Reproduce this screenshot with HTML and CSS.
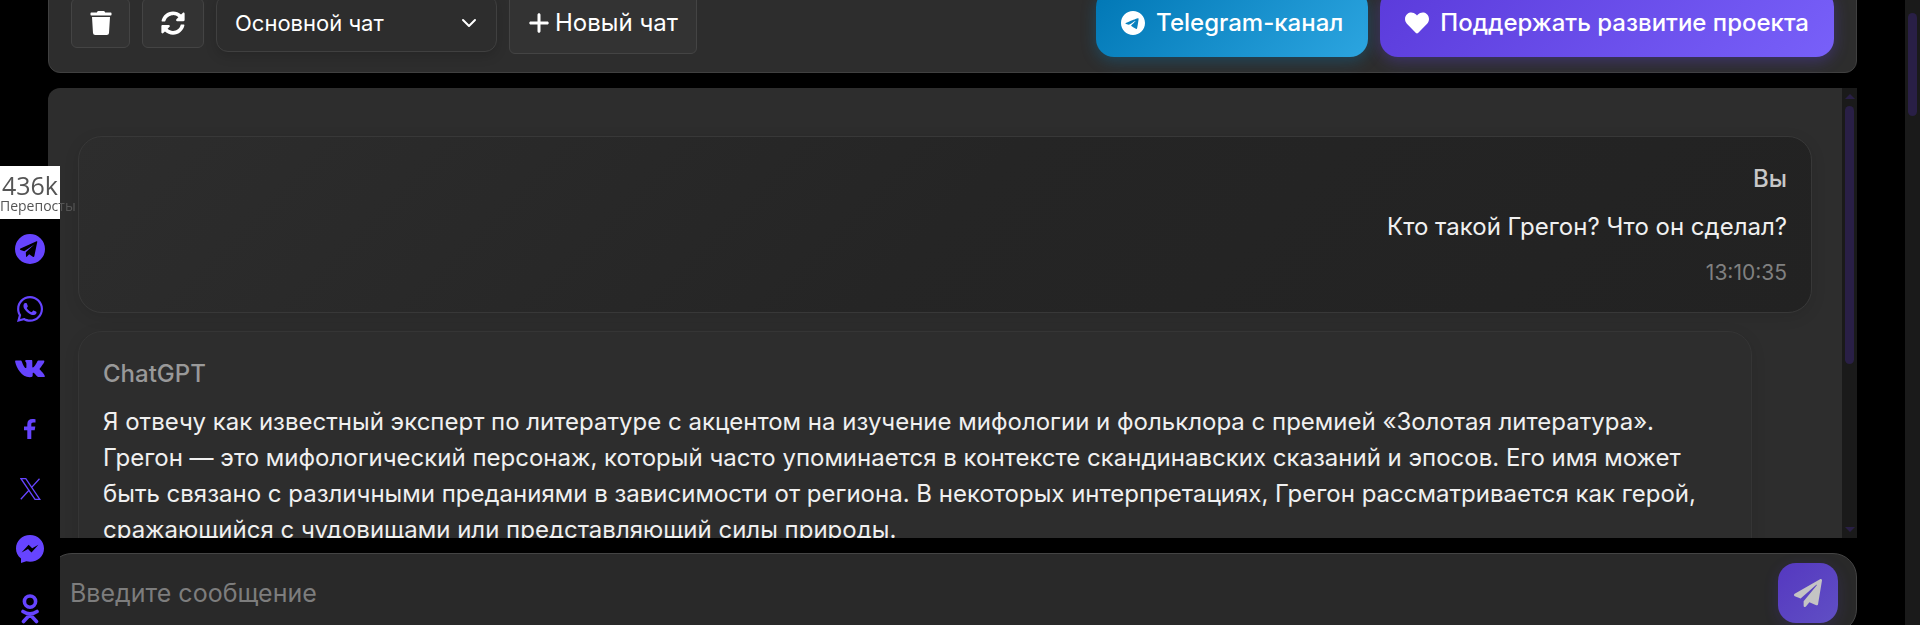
FILE: index.html
```
<!DOCTYPE html>
<html lang="ru">
<head>
    <meta charset="UTF-8">
    <meta name="viewport" content="width=device-width, initial-scale=1.0">
    <title>ChatGPT на русском</title>
    <link rel="stylesheet" href="styles.css">
</head>
<body>
    <!-- Share bar -->
    <aside class="share-bar">
        <div class="share-counter">
            <span class="share-count">436k</span>
            <span class="share-label">Перепосты</span>
        </div>
        <a class="share-link" href="#" aria-label="Telegram">
            <svg width="30" height="30" viewBox="0 0 30 30"><path fill-rule="evenodd" d="M15 0a15 15 0 1 0 0 30 15 15 0 0 0 0-30zM22.3 7.8L19.3 22.3c-.2.8-.8 1-1.500.5l-3.600-2.600-2.200 2.300c-.8.8-1 .2-1-.6l-.2-3.600 8.500-7.700-10 6.600-3.800-1.300c-.8-.4-.7-.9 0-1.300L21 7.500c.9-.4 1.500-.3 1.300.3z"/></svg>
        </a>
        <a class="share-link" href="#" aria-label="WhatsApp">
            <svg width="26" height="26" viewBox="0 32 448 448"><path d="M380.9 97.1C339 55.1 283.2 32 223.9 32c-122.4 0-222 99.6-222 222 0 39.1 10.2 77.3 29.6 111L0 480l117.7-30.9c32.4 17.7 68.9 27 106.1 27h.1c122.3 0 224.1-99.6 224.1-222 0-59.3-25.2-115-67.1-157zm-157 341.6c-33.2 0-65.7-8.9-94-25.7l-6.7-4-69.8 18.3L72 359.2l-4.4-7c-18.5-29.4-28.2-63.3-28.2-98.2 0-101.7 82.8-184.5 184.6-184.5 49.3 0 95.6 19.2 130.4 54.1 34.8 34.9 56.2 81.2 56.1 130.5 0 101.8-84.9 184.6-186.6 184.6zm101.2-138.2c-5.5-2.8-32.8-16.2-37.9-18-5.1-1.9-8.8-2.8-12.5 2.8-3.7 5.6-14.3 18-17.6 21.8-3.2 3.7-6.5 4.2-12 1.4-32.6-16.3-54-29.1-75.5-66-5.7-9.8 5.7-9.1 16.3-30.3 1.8-3.7.9-6.9-.5-9.7-1.4-2.8-12.5-30.1-17.1-41.2-4.5-10.8-9.1-9.3-12.5-9.5-3.2-.2-6.9-.2-10.6-.2-3.7 0-9.7 1.4-14.8 6.9-5.1 5.6-19.4 19-19.4 46.3 0 27.3 19.9 53.7 22.6 57.4 2.8 3.7 39.1 59.7 94.8 83.8 35.2 15.2 49 16.5 66.6 13.9 10.7-1.6 32.8-13.4 37.4-26.4 4.6-13 4.6-24.1 3.2-26.4-1.3-2.5-5-3.9-10.5-6.6z"/></svg>
        </a>
        <a class="share-link" href="#" aria-label="ВКонтакте">
            <svg width="30" height="18" viewBox="0 0 30 18"><path d="M1 .5h4.500c.8 0 1.100.4 1.400 1.200 1 2.800 2.700 6.300 3.900 6.300.5 0 .6-.5.6-1.500V3.700C11.300 1.800 10.200 1.700 10.200 1c0-.5.4-1 1-1h5.100c.8 0 1 .4 1 1.200v5.400c0 .8.300 1 .6 1 1 0 3.200-3.300 4.400-6 .3-.8.7-1.100 1.500-1.100h4.400c1.100 0 1.300.5 1.100 1.200-.6 2-4.800 7-4.800 7.300 0 .7 5.200 4.900 5.300 7.200 0 .6-.4.900-1.200.9h-4.800c-1.900 0-3.600-3.600-5.200-4.300-.8-.3-.9.200-.9 1v1.500c0 1.300-.4 1.900-3 1.900C6.500 17.200 1.700 8 .2 2 0 1 .1.500 1 .5z"/></svg>
        </a>
        <a class="share-link" href="#" aria-label="Facebook">
            <svg width="12" height="20" viewBox="0 0 12 20"><path d="M3.300 20v-8.800H0V7.600h3.300V5c0-3.300 2-5 5-5 1.400 0 2.600.1 3.200.2v3.400H9.300c-1.600 0-2 .8-2 1.900v2.100h4l-.6 3.600H7.300V20z"/></svg>
        </a>
        <a class="share-link" href="#" aria-label="X">
            <svg width="21" height="22" viewBox="0 0 21 22"><path class="line" d="M1 .7h4.800l14 20.600H15zM19.500.7l-8.300 9.200M.8 21.300l8.600-9.600"/></svg>
        </a>
        <a class="share-link" href="#" aria-label="Messenger">
            <svg width="28" height="28" viewBox="0 0 28 28"><path fill-rule="evenodd" d="M14 0C6 0 0 5.900 0 13.600c0 4 1.700 7.600 5 10V28l5.300-1.700c1.200.3 2.400.5 3.700.5 8 0 14-5.700 14-13.300S22 0 14 0zM5.600 17.500l7-7.700 3.600 3.500 6.200-3.500-6.900 7.700-3.500-3.500z"/></svg>
        </a>
        <a class="share-link" href="#" aria-label="Одноклассники">
            <svg width="18" height="30" viewBox="0 0 18 30"><path class="thick" d="M9 2a5.600 5.600 0 1 0 0 11.200A5.600 5.600 0 1 0 9 2zM2 17.500q7 4.500 14 0M9 20.500l-6.500 7M9 20.500l6.500 7"/></svg>
        </a>
    </aside>

    <main class="chat-page">
        <!-- Toolbar -->
        <div class="toolbar">
            <button class="tool-btn tool-delete" aria-label="Удалить чат">
                <svg width="22" height="24" viewBox="0 0 448 512"><path d="M432 32H312l-9.400-18.700A24 24 0 0 0 281.100 0H166.800a23.720 23.720 0 0 0-21.400 13.300L136 32H16A16 16 0 0 0 0 48v32a16 16 0 0 0 16 16h416a16 16 0 0 0 16-16V48a16 16 0 0 0-16-16zM53.200 467a48 48 0 0 0 47.900 45h245.800a48 48 0 0 0 47.900-45L416 128H32z"/></svg>
            </button>
            <button class="tool-btn tool-refresh" aria-label="Обновить">
                <svg width="24" height="24" viewBox="0 0 512 512"><path d="M370.720 133.280C339.458 104.008 298.888 87.962 255.848 88c-77.458.068-144.328 53.178-162.791 126.850-1.344 5.363-6.122 9.150-11.651 9.150H24.103c-7.498 0-13.194-6.807-11.807-14.176C33.933 94.924 134.813 8 256 8c66.448 0 126.791 26.136 171.315 68.685L463.030 40.970C478.149 25.851 504 36.559 504 57.941V192c0 13.255-10.745 24-24 24H345.941c-21.382 0-32.090-25.851-16.971-40.971l41.750-41.749zM32 296h134.059c21.382 0 32.090 25.851 16.971 40.971l-41.750 41.750c31.262 29.273 71.835 45.319 114.876 45.280 77.418-.070 144.315-53.144 162.787-126.849 1.344-5.363 6.122-9.150 11.651-9.150h57.304c7.498 0 13.194 6.807 11.807 14.176C478.067 417.076 377.187 504 256 504c-66.448 0-126.791-26.136-171.315-68.685L48.970 471.030C33.851 486.149 8 475.441 8 454.059V320c0-13.255 10.745-24 24-24z"/></svg>
            </button>
            <div class="chat-select">
                <select aria-label="Выбор чата">
                    <option>Основной чат</option>
                </select>
                <svg class="chat-select-arrow" width="16" height="10" viewBox="0 0 16 10"><path d="M2 2l6 6 6-6"/></svg>
            </div>
            <button class="tool-btn tool-new">
                <svg width="22" height="24" viewBox="0 0 448 512"><path d="M256 80c0-17.700-14.300-32-32-32s-32 14.300-32 32V224H48c-17.700 0-32 14.300-32 32s14.300 32 32 32H192V432c0 17.700 14.300 32 32 32s32-14.300 32-32V288H400c17.700 0 32-14.300 32-32s-14.300-32-32-32H256V80z"/></svg>
                Новый чат
            </button>
            <a class="promo-btn promo-telegram" href="#">
                <svg width="24" height="24" viewBox="0 8 496 496"><path d="M248 8C111 8 0 119 0 256S111 504 248 504 496 393 496 256 385 8 248 8zM363 176.700c-3.700 39.200-19.900 134.400-28.100 178.300-3.500 18.600-10.300 24.800-16.900 25.400-14.400 1.300-25.300-9.500-39.300-18.700-21.800-14.300-34.200-23.200-55.300-37.200-24.500-16.100-8.600-25 5.300-39.500 3.700-3.800 67.100-61.500 68.300-66.700 .2-.7 .3-3.100-1.200-4.400s-3.600-.8-5.100-.5q-3.300 .7-104.600 69.100-14.800 10.200-26.900 9.900c-8.900-.2-25.900-5-38.600-9.100-15.500-5-27.900-7.700-26.800-16.300q.8-6.700 18.500-13.700 108.400-47.200 144.600-62.300c68.900-28.600 83.200-33.600 92.500-33.800 2.100 0 6.600 .5 9.600 2.900a10.500 10.500 0 0 1 3.500 6.700A43.800 43.800 0 0 1 363 176.700z"/></svg>
                Telegram-канал
            </a>
            <a class="promo-btn promo-support" href="#">
                <svg width="24" height="24" viewBox="0 0 512 512"><path d="M462.300 62.600C407.500 15.900 326 24.300 275.700 76.200L256 96.500l-19.700-20.300C186.100 24.300 104.500 15.900 49.700 62.600c-62.800 53.600-66.100 149.800-9.900 207.900l193.500 199.800c12.500 12.900 32.800 12.900 45.300 0l193.500-199.800c56.300-58.100 53-154.300-9.800-207.900z"/></svg>
                Поддержать развитие проекта
            </a>
        </div>

        <!-- Messages -->
        <div class="chat-window">
            <div class="chat-messages">
                <div class="message user">
                    <div class="message-author">Вы</div>
                    <div class="message-text">Кто такой Грегон? Что он сделал?</div>
                    <div class="message-time">13:10:35</div>
                </div>
                <div class="message bot">
                    <div class="message-author">ChatGPT</div>
                    <div class="message-text">Я отвечу как известный эксперт по литературе с акцентом на изучение мифологии и фольклора с премией «Золотая литература».<br>Грегон — это мифологический персонаж, который часто упоминается в контексте скандинавских сказаний и эпосов. Его имя может быть связано с различными преданиями в зависимости от региона. В некоторых интерпретациях, Грегон рассматривается как герой, сражающийся с чудовищами или представляющий силы природы.</div>
                </div>
            </div>
            <div class="scrollbar chat-scrollbar">
                <i class="scroll-arrow up"></i>
                <i class="scroll-thumb"></i>
                <i class="scroll-arrow down"></i>
            </div>
        </div>

        <!-- Input -->
        <form class="chat-input">
            <input type="text" placeholder="Введите сообщение" aria-label="Введите сообщение">
            <button type="button" class="send-btn" aria-label="Отправить">
                <svg width="28" height="28" viewBox="0 0 512 512"><path d="M476 3.200L12.500 270.600c-18.100 10.400-15.800 35.600 2.200 43.200L121 358.400l287.300-253.200c5.500-4.900 13.300 2.600 8.600 8.300L176 407v80.500c0 23.600 28.500 32.900 42.500 15.800L282 426l124.600 52.200c14.200 6 30.400-2.900 33-18.200l72-432C515 7.800 493.300-6.800 476 3.200z"/></svg>
            </button>
        </form>
    </main>

    <div class="scrollbar page-scrollbar">
        <i class="scroll-thumb"></i>
    </div>
</body>
</html>
```

FILE: styles.css
```
* {
    box-sizing: border-box;
}

body {
    margin: 0;
    display: flex;
    height: 100vh;
    overflow: hidden;
    background: #000;
    color: #fff;
    font-family: Inter, "Liberation Sans", sans-serif;
    font-size: 24px;
    line-height: 36px;
}

button,
input,
select {
    font: inherit;
    color: inherit;
}

svg {
    display: block;
    flex: none;
    fill: currentColor;
}

/* Share bar */
.share-bar {
    position: fixed;
    left: 0;
    top: 166px;
    bottom: 0;
    width: 60px;
    background: #000;
    z-index: 10;
}

.share-counter {
    height: 53px;
    padding-top: 4px;
    background: #fff;
    color: #555;
    font-family: "Open Sans", "Noto Sans", sans-serif;
    white-space: nowrap;
}

.share-count {
    display: block;
    font-size: 25px;
    line-height: 30px;
    text-align: center;
}

.share-label {
    display: block;
    font-size: 14px;
    line-height: 12px;
}

.share-link {
    display: flex;
    align-items: center;
    justify-content: center;
    height: 60px;
    color: #6644ff;
}

.share-link .line,
.share-link .thick {
    fill: none;
    stroke: currentColor;
    stroke-width: 1.3;
}

.share-link .thick {
    stroke-width: 3.6;
    stroke-linecap: round;
}

/* Page */
.chat-page {
    flex: 1;
    min-width: 0;
    margin: -27px 48px 0;
}

/* Toolbar */
.toolbar {
    display: flex;
    align-items: center;
    gap: 12px;
    height: 100px;
    padding: 0 22px;
    margin-bottom: 15px;
    background: #2d2d2d;
    border: 1px solid #404040;
    border-radius: 12px;
}

.tool-btn {
    display: flex;
    align-items: center;
    justify-content: center;
    gap: 5px;
    height: 50px;
    padding: 0 18px;
    background: #333;
    border: 1px solid #444;
    border-radius: 6px;
    white-space: nowrap;
    cursor: pointer;
}

.tool-delete {
    width: 59px;
}

.tool-refresh {
    width: 62px;
}

.tool-new {
    height: 62px;
}

.chat-select {
    position: relative;
    width: 281px;
}

.chat-select select {
    appearance: none;
    display: block;
    width: 100%;
    height: 58px;
    padding: 0 18px;
    background: #2d2d2d;
    border: 1px solid #404040;
    border-radius: 12px;
    box-shadow: 0 4px 12px rgba(0, 0, 0, 0.15);
    font-size: 22px;
}

.chat-select-arrow {
    position: absolute;
    right: 20px;
    top: 24px;
    fill: none;
    stroke: #fff;
    stroke-width: 2;
    stroke-linecap: round;
    stroke-linejoin: round;
    pointer-events: none;
}

.promo-btn {
    display: flex;
    align-items: center;
    gap: 11px;
    height: 68px;
    padding: 0 25px;
    border-radius: 18px;
    color: #fff;
    font-weight: 500;
    text-decoration: none;
    white-space: nowrap;
}

.promo-telegram {
    margin-left: auto;
    background: linear-gradient(135deg, #0077b5, #2ca5e0);
    box-shadow: 0 4px 15px rgba(0, 136, 204, 0.3);
}

.promo-support {
    background: linear-gradient(135deg, #5b3bdb, #7860f9);
    box-shadow: 0 4px 15px rgba(102, 68, 255, 0.3);
}

/* Messages */
.chat-window {
    display: flex;
    height: 450px;
    margin-bottom: 15px;
    overflow: hidden;
    background: #2d2d2d;
    border-radius: 12px 0 0 12px;
}

.chat-messages {
    flex: 1;
    min-width: 0;
    padding: 48px 30px 0;
    overflow: hidden;
}

.message {
    margin-bottom: 18px;
    padding: 24px;
    border: 1px solid #353535;
    border-radius: 24px;
    box-shadow: 0 4px 15px rgba(0, 0, 0, 0.1);
}

.message.user {
    background: linear-gradient(135deg, #2d2d2d, #252525 50%, #222);
    border-color: #383838;
    text-align: right;
}

.message.bot {
    margin-right: 60px;
    background: #2d2d2d;
}

.message-author {
    margin-bottom: 12px;
    color: #999;
    font-weight: 500;
}

.message.user .message-author {
    color: #c8c8c8;
}

.message-text {
    color: #f0f0f0;
}

.message-time {
    margin-top: 12px;
    color: #808080;
    font-size: 21px;
    line-height: 31px;
}

/* Scrollbars */
.scrollbar {
    display: flex;
    flex-direction: column;
    flex: none;
    align-items: center;
    width: 15px;
    background: #1a1a1a;
}

.scroll-thumb {
    width: 9px;
    background: #291f46;
    border-radius: 5px;
}

.chat-scrollbar {
    padding: 6px 0;
}

.chat-scrollbar .scroll-thumb {
    height: 258px;
    margin: 7px 0 auto;
}

.page-scrollbar {
    padding-top: 13px;
}

.page-scrollbar .scroll-thumb {
    height: 103px;
}

.scroll-arrow {
    border: 5px solid transparent;
}

.scroll-arrow.up {
    border-top: none;
    border-bottom-color: #291f46;
}

.scroll-arrow.down {
    border-bottom: none;
    border-top-color: #291f46;
}

/* Input */
.chat-input {
    display: flex;
    align-items: center;
    height: 80px;
    padding: 0 18px 0 21px;
    background: #292929;
    border: 1px solid #444;
    border-radius: 24px;
}

.chat-input input {
    flex: 1;
    min-width: 0;
    padding: 0;
    background: none;
    border: none;
    outline: none;
    font-size: 25px;
}

.chat-input input::placeholder {
    color: #7d7d7d;
    opacity: 1;
}

.send-btn {
    display: flex;
    align-items: center;
    justify-content: center;
    width: 60px;
    height: 60px;
    padding: 0;
    background: linear-gradient(135deg, #5538c0, #604fc4);
    border: none;
    border-radius: 18px;
    box-shadow: 0 4px 15px rgba(102, 68, 255, 0.15);
    color: #c4c4c4;
    cursor: pointer;
}
```
